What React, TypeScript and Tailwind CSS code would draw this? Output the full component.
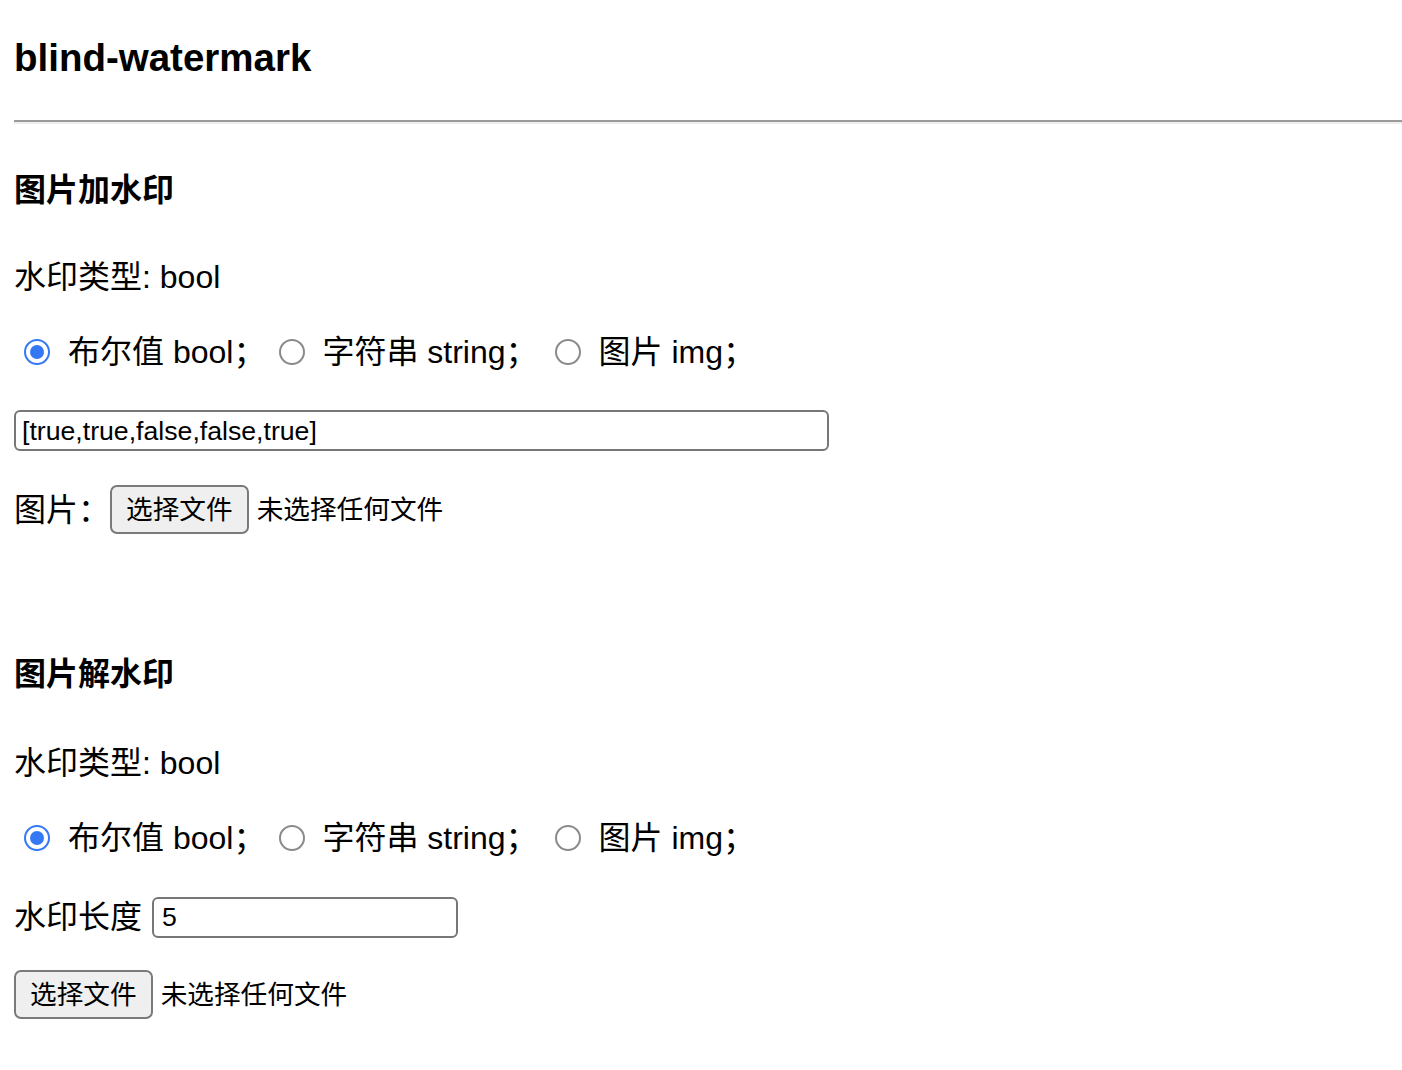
import React from "react";

const font = { fontFamily: '"Liberation Sans", "Noto Sans CJK SC", sans-serif' };

function Radio({ checked }: { checked?: boolean }) {
  return checked ? (
    <span className="flex h-[26px] w-[26px] shrink-0 items-center justify-center rounded-full border-[2.5px] border-[#3478f6] bg-white">
      <span className="block h-[14px] w-[14px] rounded-full bg-[#3478f6]" />
    </span>
  ) : (
    <span className="block h-[26px] w-[26px] shrink-0 rounded-full border-2 border-[#8a8a8a] bg-white" />
  );
}

function RadioRow({ mt }: { mt: string }) {
  return (
    <div className={`flex h-[40px] items-center text-[32px] text-black ${mt}`}>
      <span className="ml-[10px] block"><Radio checked /></span>
      <span className="ml-[18px] whitespace-pre">布尔值 bool；</span>
      <span className="ml-[14px] block"><Radio /></span>
      <span className="ml-[17px] whitespace-pre">字符串 string；</span>
      <span className="ml-[17px] block"><Radio /></span>
      <span className="ml-[18px] whitespace-pre">图片 img；</span>
    </div>
  );
}

function FileButton() {
  return (
    <span className="flex h-[49px] items-center rounded-[7px] border-2 border-[#7a7a7a] bg-[#efefef] px-[14px] text-[26.67px] text-black">
      选择文件
    </span>
  );
}

export default function App() {
  return (
    <div className="min-h-[1070px] bg-white pl-[14px] text-black" style={font}>
      <div className="h-[36px]" />
      <div className="flex h-[44px] items-center text-[38.5px] font-bold">blind-watermark</div>
      <div className="mt-[40px] h-[4px] border-t-2 border-b-2 border-t-[#9b9b9b] border-b-[#eeeeee]" />

      <div className="mt-[46px] flex h-[40px] items-center text-[32px] font-bold">图片加水印</div>
      <div className="mt-[47px] flex h-[40px] items-center text-[32px]">水印类型: bool</div>
      <RadioRow mt="mt-[35px]" />
      <div className="mt-[38px] flex h-[41px] w-[815px] items-center rounded-[6px] border-2 border-[#777777] px-[6px] text-[26.67px]">
        [true,true,false,false,true]
      </div>
      <div className="mt-[34px] flex h-[49px] items-center">
        <span className="text-[32px]">图片：</span>
        <FileButton />
        <span className="ml-[8px] text-[26.67px]">未选择任何文件</span>
      </div>

      <div className="mt-[120px] flex h-[40px] items-center text-[32px] font-bold">图片解水印</div>
      <div className="mt-[49px] flex h-[40px] items-center text-[32px]">水印类型: bool</div>
      <RadioRow mt="mt-[35px]" />
      <div className="mt-[39px] flex h-[40px] items-center">
        <span className="text-[32px]">水印长度</span>
        <span className="ml-[10px] flex h-[41px] w-[306px] items-center rounded-[6px] border-2 border-[#777777] px-[8px] text-[26.67px]">5</span>
      </div>
      <div className="mt-[33px] flex h-[49px] items-center">
        <FileButton />
        <span className="ml-[8px] text-[26.67px]">未选择任何文件</span>
      </div>
    </div>
  );
}
